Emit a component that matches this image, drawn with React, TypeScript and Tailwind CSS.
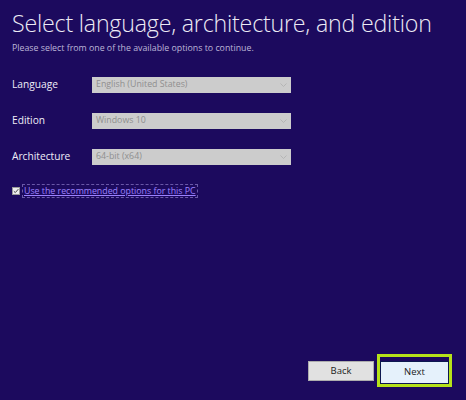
import React from "react";

const fields = [
  { label: "Language", value: "English (United States)" },
  { label: "Edition", value: "Windows 10" },
  { label: "Architecture", value: "64-bit (x64)" },
];

export default function App() {
  return (
    <div
      className="w-[466px] h-[400px] bg-[#1c0a5e] text-white flex flex-col overflow-hidden"
      style={{ fontFamily: '"Open Sans", "Noto Sans", sans-serif' }}
    >
      <div className="px-[12px] pt-[6px]">
        <h1 className="text-[23.2px] font-light leading-[34px] text-[#ecebf5] tracking-[-0.2px] whitespace-nowrap">
          Select language, architecture, and edition
        </h1>
        <p className="text-[8.8px] leading-[12px] text-[#bdb6d8] mt-[2px]">
          Please select from one of the available options to continue.
        </p>
      </div>

      <div className="flex flex-col gap-[20px] mt-[23px] px-[12px]">
        {fields.map((f) => (
          <div key={f.label} className="flex items-center h-[16px]">
            <span className="w-[80px] text-[10.2px] text-[#efeef8]">{f.label}</span>
            <div className="w-[199px] h-[16px] bg-[#cccccc] flex items-center justify-between pl-[4px] pr-[4px]">
              <span className="text-[8.8px] text-[#8f8f8f]">{f.value}</span>
              <svg width="7" height="4" viewBox="0 0 7 4">
                <path d="M0.5 0.5 L3.5 3.5 L6.5 0.5" fill="none" stroke="#b5b5b5" strokeWidth="1" />
              </svg>
            </div>
          </div>
        ))}
      </div>

      <div className="flex items-center mt-[19px] px-[12px]">
        <div className="w-[8px] h-[8px] bg-[#eeeeee] border border-[#9a9a9a] flex items-center justify-center">
          <svg width="6" height="6" viewBox="0 0 6 6">
            <path d="M0.8 3.2 L2.3 4.6 L5.3 1.2" fill="none" stroke="#444" strokeWidth="1" />
          </svg>
        </div>
        <span className="ml-[2px] text-[8.8px] leading-[12px] text-[#9c82ff] underline border border-dashed border-[#6a58a8] px-[1px]">
          Use the recommended options for this PC
        </span>
      </div>

      <div className="flex-1" />

      <div className="flex justify-end items-center gap-[3px] pr-[14px] pb-[13px]">
        <button className="w-[66px] h-[20px] bg-[#e1e1e1] border border-[#adadad] text-[9.5px] text-[#222]">
          Back
        </button>
        <div className="border-[3px] border-[#b6e21a]">
          <button className="w-[69px] h-[23px] bg-[#e5f1fb] border border-[#0d1850] text-[9.5px] text-[#222]">
            Next
          </button>
        </div>
      </div>
    </div>
  );
}
